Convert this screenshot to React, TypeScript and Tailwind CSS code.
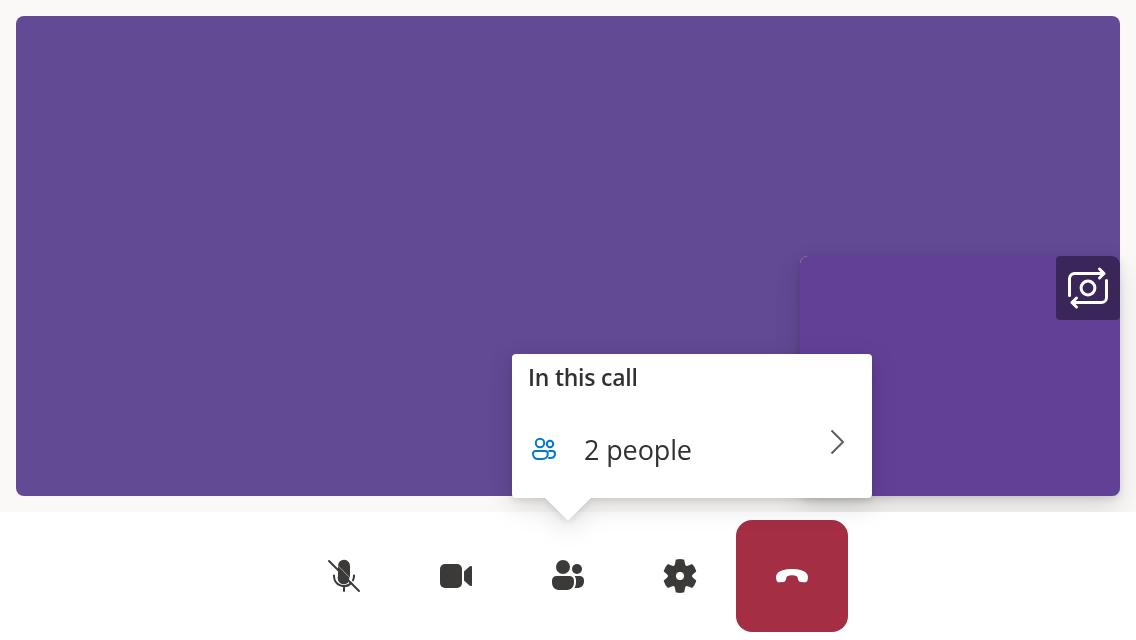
import type { ReactNode } from "react";

function MicOffIcon() {
  return (
    <svg className="size-10" viewBox="0 0 40 40" fill="none">
      <path d="M14 14 25.200 25.200A6.200 6.200 0 0 1 14 20ZM14 9.500A6 6 0 0 1 26 10v10l-.3 1.300Z" fill="#3b3a39" />
      <path d="M14 14V10L25.500 21.500l-1 3Z" fill="#3b3a39" />
      <path d="M10 19.500v.5a10 10 0 0 0 17.200 7M30 19.500v.5a10 10 0 0 1-1 4.300M20 30v5" stroke="#3b3a39" strokeWidth="2" strokeLinecap="round" />
      <path d="m5 5 30 30" stroke="#3b3a39" strokeWidth="2" strokeLinecap="round" />
    </svg>
  );
}

function VideoIcon() {
  return (
    <svg className="size-10" viewBox="0 0 40 40" fill="#3b3a39">
      <rect x="4" y="8" width="22" height="24" rx="5" />
      <path d="m28 15.500 5.800-5.200c1-.8 2.200-.4 2.200.8v17.800c0 1.200-1.200 1.600-2.200.8L28 24.500Z" />
    </svg>
  );
}

function PeopleIcon() {
  return (
    <svg className="size-10" viewBox="0 0 40 40" fill="#3b3a39">
      <circle cx="15" cy="11" r="7" />
      <circle cx="29" cy="13" r="5" />
      <path d="M8.500 20h13a4.500 4.500 0 0 1 4.500 4.500v1.500c0 5.500-3 8-8 8h-6c-5 0-8-2.500-8-8v-1.500A4.500 4.500 0 0 1 8.500 20Z" />
      <path d="M26.600 20h5.200a4.200 4.200 0 0 1 4.200 4.200v.8c0 4.700-2.500 7-7 7h-2.600c1.200-1.600 1.600-3.700 1.600-6v-1.500c0-1.700-.5-3.200-1.400-4.500Z" />
    </svg>
  );
}

function SettingsIcon() {
  return (
    <svg className="size-10" viewBox="0 0 20 20" fill="#3b3a39">
      <path d="M1.910 7.380A8.500 8.500 0 0 1 3.690 4.300a.5.5 0 0 1 .54-.13l1.920.68a1 1 0 0 0 1.320-.76l.36-2a.5.5 0 0 1 .4-.4 8.530 8.530 0 0 1 3.550 0c.2.040.35.2.38.4l.37 2a1 1 0 0 0 1.320.76l1.920-.68a.5.5 0 0 1 .54.13 8.500 8.500 0 0 1 1.780 3.080c.06.2 0 .4-.15.54l-1.560 1.320a1 1 0 0 0 0 1.520l1.560 1.320a.5.5 0 0 1 .15.54 8.500 8.500 0 0 1-1.780 3.080.5.5 0 0 1-.54.13l-1.920-.68a1 1 0 0 0-1.320.76l-.37 2a.5.5 0 0 1-.38.4 8.530 8.530 0 0 1-3.560 0 .5.5 0 0 1-.39-.4l-.36-2a1 1 0 0 0-1.320-.76l-1.920.68a.5.5 0 0 1-.54-.13 8.500 8.500 0 0 1-1.780-3.080.5.5 0 0 1 .15-.54l1.560-1.320a1 1 0 0 0 0-1.520L2.060 7.920a.5.5 0 0 1-.15-.54ZM8 10a2 2 0 1 0 4 0 2 2 0 0 0-4 0Z" />
    </svg>
  );
}

function HangUpIcon() {
  return (
    <svg className="size-10" viewBox="0 0 40 40" fill="white">
      <path d="M20 13c7 0 13 1.800 15 5 .9 1.400 1.200 3 .8 5l-.3 1.300c-.4 1.500-1.700 2.200-3.200 2l-3.600-.2c-1.200-.2-2-.9-2.400-2.100l-1.100-3.600c-1.500-.8-3.200-1.200-5.200-1.200s-3.700.4-5.200 1.200l-1.100 3.600c-.4 1.200-1.200 1.900-2.400 2.100l-3.600.2c-1.500.2-2.800-.5-3.200-2L4.200 23c-.4-2-.1-3.600.8-5 2-3.200 8-5 15-5Z" />
    </svg>
  );
}

function SwitchCameraIcon() {
  return (
    <svg className="size-16" viewBox="0 0 64 64" fill="none" stroke="white" strokeWidth="3" strokeLinecap="round" strokeLinejoin="round">
      <path d="M13.500 39.500V22.500a5 5 0 0 1 5-5H48M43.500 13l4.500 4.500-4.500 4.500M50.500 24.500v17a5 5 0 0 1-5 5H16M20.500 42 16 46.500l4.500 4.500" />
      <circle cx="32" cy="32" r="6.900" />
    </svg>
  );
}

function ParticipantsIcon() {
  return (
    <svg className="mb-0.5 h-7 w-8" viewBox="0 0 32 28" fill="none" stroke="#0078d4" strokeWidth="2">
      <circle cx="12" cy="8" r="4.200" />
      <circle cx="22" cy="9" r="3.200" />
      <path d="M7.500 16h9.800a2.500 2.500 0 0 1 2.500 2.500c0 3.800-1.900 5.500-5.400 5.500h-4C6.900 24 5 22.300 5 18.500A2.500 2.500 0 0 1 7.500 16ZM20.500 16h4a2.500 2.500 0 0 1 2.500 2.500c0 3.200-1.600 4.500-4.800 4.500h-2" />
    </svg>
  );
}

function ControlButton({ label, children }: { label: string; children: ReactNode }) {
  return (
    <button aria-label={label} className="flex size-28 items-center justify-center">
      {children}
    </button>
  );
}

function PeopleFlyout() {
  return (
    <div className="absolute top-[354px] left-[512px] h-36 w-[360px] [filter:drop-shadow(0_2px_3.600px_rgba(0,0,0,0.11))_drop-shadow(0_8px_12px_rgba(0,0,0,0.13))]">
      <section className="flex h-full flex-col rounded-[4px] bg-white text-[#323130]">
        <h2 className="h-12 pl-4 text-[23px] leading-[46px] font-semibold tracking-[-0.24px]">In this call</h2>
        <button className="flex h-24 items-center pr-[26px] pl-4 text-left">
          <ParticipantsIcon />
          <span className="ml-6 flex-1 text-[27px] leading-8 tracking-[-0.12px]">2 people</span>
          <svg className="mb-4 h-7 w-4" viewBox="0 0 16 28" fill="none" stroke="#605e5c" strokeWidth="2">
            <path d="m1.500 2.500 11.500 11.500-11.500 11.500" />
          </svg>
        </button>
      </section>
      <svg className="absolute top-36 left-8 h-6 w-12" viewBox="0 0 48 24" fill="white">
        <path d="M1.200 0h45.600L24 22.800Z" />
      </svg>
    </div>
  );
}

export default function App() {
  return (
    <main className="relative flex h-[640px] w-[1136px] flex-col overflow-hidden bg-[#faf9f8] font-['Open_Sans','Noto_Sans',sans-serif]">
      <div className="h-[512px] overflow-hidden p-4">
        <div className="flex h-[480px] items-end justify-end rounded-lg bg-[#624a94]">
          <div className="h-60 w-80 rounded-lg bg-[#edebe9] shadow-[0_12.800px_28.800px_rgba(0,0,0,0.13),0_2.400px_7.200px_rgba(0,0,0,0.11)]">
            <div className="flex h-full items-start justify-end rounded-lg bg-[#624096]">
              <button aria-label="Switch camera" className="size-16 rounded-[4px] rounded-tr-lg bg-[#3b265a]">
                <SwitchCameraIcon />
              </button>
            </div>
          </div>
        </div>
      </div>
      <nav className="flex h-32 items-center justify-center bg-white">
        <ControlButton label="Unmute"><MicOffIcon /></ControlButton>
        <ControlButton label="Camera"><VideoIcon /></ControlButton>
        <ControlButton label="People"><PeopleIcon /></ControlButton>
        <ControlButton label="Settings"><SettingsIcon /></ControlButton>
        <button aria-label="Leave call" className="flex size-28 items-center justify-center rounded-[16px] bg-[#a42e43]">
          <HangUpIcon />
        </button>
      </nav>
      <PeopleFlyout />
    </main>
  );
}
